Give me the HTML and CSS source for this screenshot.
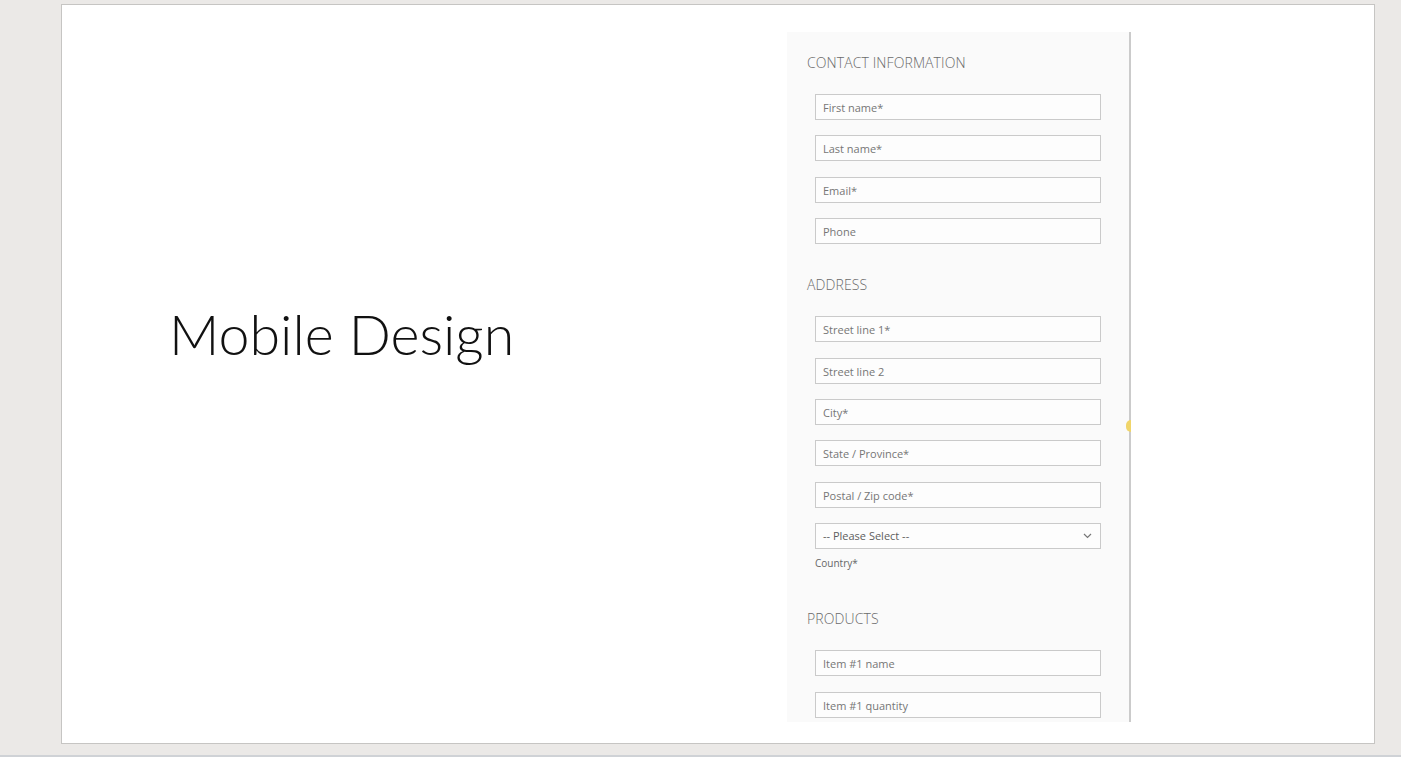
FILE: index.html
```html
<!DOCTYPE html>
<html lang="en">
<head>
<meta charset="utf-8">
<title>Mobile Design</title>
<link rel="stylesheet" href="styles.css">
</head>
<body>
<div class="window">
  <div class="slide">
    <div class="title-col">
      <h1 class="title">Mobile Design</h1>
    </div>
    <div class="form">
      <span class="handle"></span>
      <h2 class="section">CONTACT INFORMATION</h2>
      <div class="fields">
        <div class="field">First name*</div>
        <div class="field">Last name*</div>
        <div class="field">Email*</div>
        <div class="field">Phone</div>
      </div>
      <h2 class="section next">ADDRESS</h2>
      <div class="fields">
        <div class="field">Street line 1*</div>
        <div class="field">Street line 2</div>
        <div class="field">City*</div>
        <div class="field">State / Province*</div>
        <div class="field">Postal / Zip code*</div>
        <div class="field select">
          <span>-- Please Select --</span>
          <svg class="chev" width="9" height="6" viewBox="0 0 9 6"><path d="M1 1l3.5 3.5L8 1" fill="none" stroke="#777" stroke-width="1.2"/></svg>
        </div>
      </div>
      <div class="hint">Country*</div>
      <h2 class="section products">PRODUCTS</h2>
      <div class="fields">
        <div class="field">Item #1 name</div>
        <div class="field">Item #1 quantity</div>
      </div>
    </div>
  </div>
  <div class="statusline"></div>
</div>
</body>
</html>
```
FILE: styles.css
```css
html, body {
  margin: 0;
  padding: 0;
}
body {
  background: #ebe9e7;
  width: 1401px;
  height: 757px;
  overflow: hidden;
}
.window {
  display: flex;
  flex-direction: column;
  height: 757px;
}
.slide {
  margin: 4px 0 0 61px;
  width: 1312px;
  height: 738px;
  border: 1px solid #c6c5c3;
  background: #ffffff;
  display: flex;
  align-items: flex-start;
}
.title-col {
  width: 618px;
  padding-left: 107px;
  flex: none;
}
.title {
  margin: 296px 0 0 0;
  font-family: Lato, "Open Sans", sans-serif;
  font-weight: 300;
  font-size: 55.5px;
  line-height: 1.2;
  color: #111;
  white-space: nowrap;
}
.form {
  position: relative;
  flex: none;
  margin-top: 27px;
  width: 342px;
  height: 670px;
  padding-top: 20px;
  background: #fafafa;
  border-right: 2px solid #cbcbcb;
  font-family: "Open Sans", sans-serif;
}
.handle {
  position: absolute;
  right: -2px;
  top: 388px;
  width: 5px;
  height: 12px;
  border-radius: 6px 0 0 6px;
  background: #f0d56a;
}
.section {
  margin: 0 0 22px 20px;
  padding-top: 1px;
  height: 19px;
  font-size: 14px;
  line-height: 20px;
  font-weight: 300;
  color: #6a6a6a;
  letter-spacing: 0.1px;
}
.section.next {
  margin-top: 30px;
}
.section.products {
  margin-top: 37px;
}
.fields {
  display: flex;
  flex-direction: column;
  gap: 15.4px;
  margin-left: 28px;
}
.field {
  box-sizing: border-box;
  width: 286px;
  height: 26px;
  border: 1px solid #cacaca;
  background: #fdfdfd;
  padding: 1px 0 0 7px;
  font-size: 11px;
  line-height: 24px;
  color: #767676;
}
.select {
  display: flex;
  align-items: center;
  justify-content: space-between;
  padding-top: 0;
  padding-right: 8px;
  color: #5e5e5e;
}
.chev {
  display: block;
}
.hint {
  margin: 6px 0 0 28px;
  font-size: 10px;
  line-height: 16px;
  color: #666;
}
.statusline {
  margin-top: auto;
  height: 2px;
  background: #cfd2d6;
}
```
